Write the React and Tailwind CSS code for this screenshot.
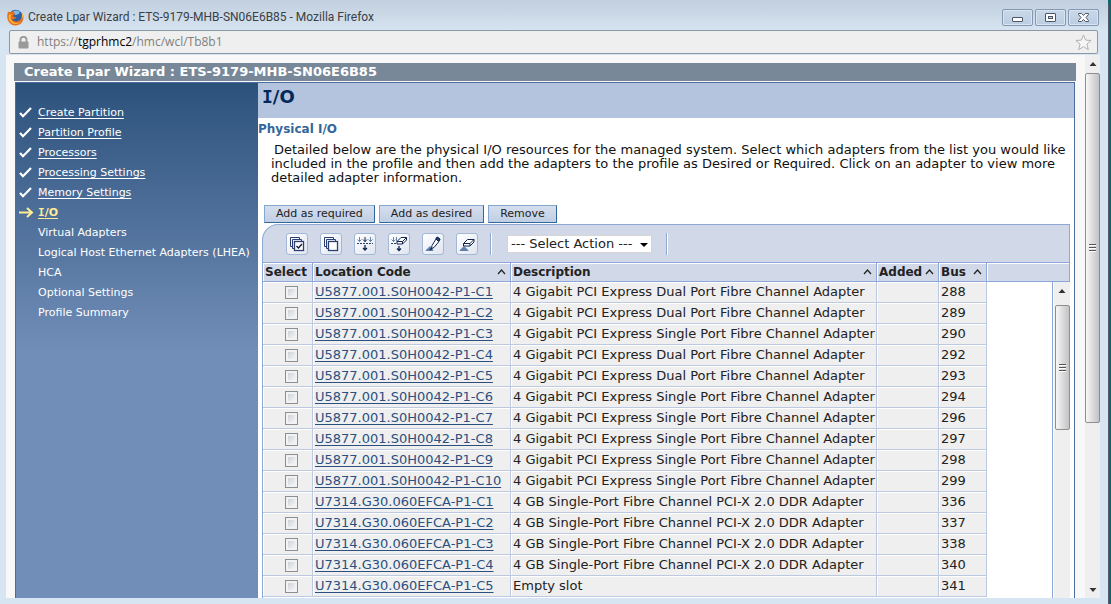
import React from "react";

const steps = [
  { label: "Create Partition", state: "done" },
  { label: "Partition Profile", state: "done" },
  { label: "Processors", state: "done" },
  { label: "Processing Settings", state: "done" },
  { label: "Memory Settings", state: "done" },
  { label: "I/O", state: "current" },
  { label: "Virtual Adapters", state: "todo" },
  { label: "Logical Host Ethernet Adapters (LHEA)", state: "todo" },
  { label: "HCA", state: "todo" },
  { label: "Optional Settings", state: "todo" },
  { label: "Profile Summary", state: "todo" },
];

const DUAL = "4 Gigabit PCI Express Dual Port Fibre Channel Adapter";
const SINGLE = "4 Gigabit PCI Express Single Port Fibre Channel Adapter";
const DDR = "4 GB Single-Port Fibre Channel PCI-X 2.0 DDR Adapter";

const rows = [
  ["U5877.001.S0H0042-P1-C1", DUAL, "288"],
  ["U5877.001.S0H0042-P1-C2", DUAL, "289"],
  ["U5877.001.S0H0042-P1-C3", SINGLE, "290"],
  ["U5877.001.S0H0042-P1-C4", DUAL, "292"],
  ["U5877.001.S0H0042-P1-C5", DUAL, "293"],
  ["U5877.001.S0H0042-P1-C6", SINGLE, "294"],
  ["U5877.001.S0H0042-P1-C7", SINGLE, "296"],
  ["U5877.001.S0H0042-P1-C8", SINGLE, "297"],
  ["U5877.001.S0H0042-P1-C9", SINGLE, "298"],
  ["U5877.001.S0H0042-P1-C10", SINGLE, "299"],
  ["U7314.G30.060EFCA-P1-C1", DDR, "336"],
  ["U7314.G30.060EFCA-P1-C2", DDR, "337"],
  ["U7314.G30.060EFCA-P1-C3", DDR, "338"],
  ["U7314.G30.060EFCA-P1-C4", DDR, "340"],
  ["U7314.G30.060EFCA-P1-C5", "Empty slot", "341"],
];

function FirefoxIcon() {
  return (
    <svg width="17" height="17" viewBox="0 0 17 17" aria-hidden="true">
      <circle cx="8.6" cy="8.2" r="7.4" fill="#2b5fa8" />
      <path d="M6 2.5C8 1 11 1.2 13 3l-2 2.500-3 .5z" fill="#7db8e8" />
      <path
        d="M1.200 2.200C.1 5-.2 8.500.9 11.200 2.200 14.500 5.300 16.500 8.500 16.500c4.500 0 8-3.600 8-8 0-2.400-.9-4.500-2.500-6 .9 1.800 1.100 3.600.7 5.200-.6 2.800-2.900 4.800-5.600 4.700-2 0-3.500-1-4.100-2.400 1.200.6 2.300.3 3.200-.4.5-.4 1-.5 1.200-.9-.7-.8-1.700-.7-2.500-.6-.8-.5-.9-1.200-.6-1.900.6-.4 1.500-.5 2.100-1.100-.1-.6-1.300-.8-2-1.400-.2-.7 0-1.300.6-2-1.200 0-2.200.7-2.800 1.400-.9-.2-1.500-.1-2.200.2C1.500 3.500 1.300 3 1.200 2.200z"
        fill="#e8701a"
      />
      <path d="M2 5.500c-1 3 0 6.500 2.500 8.300C7 15.600 11 15.500 13.500 13 10 15 5.500 13.800 4 10.500 3.300 9 3.500 7 4.500 5.500z" fill="#f8b53a" />
      <path d="M14.300 3.500c1 2 1.200 4.500.2 6.500 1.100-.9 1.600-2.200 1.500-3.400-.2-1.300-.8-2.300-1.700-3.100z" fill="#fbd35a" />
    </svg>
  );
}

function WindowButton({ label, children }) {
  return (
    <button
      type="button"
      aria-label={label}
      className="flex h-[17px] w-[31px] items-center justify-center rounded-xs border border-[#8597b3] bg-linear-to-b from-[#c9d7e8] to-[#bccde2] shadow-[inset_0_0_0_1px_#d9e4f1]"
    >
      <svg width="13" height="11" viewBox="0 0 13 11" aria-hidden="true">
        {children}
      </svg>
    </button>
  );
}

function TitleBar() {
  return (
    <header className="flex h-[30px] shrink-0 items-center gap-1 bg-linear-to-b from-[#c1cfde] to-[#d6e3f0] pt-1 pr-[9px] pl-[7px] font-['Roboto',sans-serif]">
      <FirefoxIcon />
      <h1 className="flex-1 text-[12px] leading-4 text-[#3a4046]">
        Create Lpar Wizard : ETS-9179-MHB-SN06E6B85 - Mozilla Firefox
      </h1>
      <div className="flex gap-0.5">
        <WindowButton label="Minimize">
          <rect x="1.500" y="5.500" width="10" height="4" rx=".5" fill="#fff" stroke="#4c5568" />
        </WindowButton>
        <WindowButton label="Maximize">
          <rect x="1.500" y="1.500" width="10" height="8" rx=".5" fill="#fff" stroke="#4c5568" />
          <rect x="4.500" y="4.500" width="4" height="2" fill="#c5d3e5" stroke="#4c5568" />
        </WindowButton>
        <WindowButton label="Close">
          <path
            d="M1.500 1.500h3l2 2 2-2h3v1L9 5.500l2.500 3v1h-3l-2-2-2 2h-3v-1L4 5.500l-2.500-3z"
            fill="#fff"
            stroke="#4c5568"
          />
        </WindowButton>
      </div>
    </header>
  );
}

function AddressBar() {
  return (
    <div className="mr-[10px] ml-[9px] flex h-6 shrink-0 items-center rounded-xs border border-[#8b98a6] bg-[#efefef] pr-[5px] pl-2 font-['Open_Sans',sans-serif] text-[12px]">
      <svg width="11" height="13" viewBox="0 0 11 13" className="mr-2" aria-hidden="true">
        <path d="M2.500 6V3.800a3 3 0 0 1 6 0V6" fill="none" stroke="#9a9a9a" strokeWidth="1.800" />
        <rect x=".5" y="5.500" width="10" height="7" rx="1" fill="#9a9a9a" />
      </svg>
      <p className="flex-1 text-[#808080]">
        https://<span className="text-black">tgprhmc2</span>/hmc/wcl/Tb8b1
      </p>
      <button type="button" aria-label="Bookmark this page">
        <svg width="17" height="17" viewBox="0 0 17 17" aria-hidden="true">
          <path
            d="M8.500 1l2.100 5.100 5.500.4-4.200 3.500 1.400 5.600-4.800-3-4.800 3 1.400-5.600L.9 6.500l5.500-.4z"
            fill="#f7f7f7"
            stroke="#b2b2b2"
            strokeLinejoin="round"
          />
        </svg>
      </button>
    </div>
  );
}

function Arrow({ down }) {
  return (
    <svg width="8" height="4" viewBox="0 0 8 4" aria-hidden="true">
      <path d={down ? "M.5 0h7L4 4z" : "M.5 4h7L4 0z"} fill="#333" />
    </svg>
  );
}

function Thumb({ className }) {
  return (
    <div
      className={
        "flex items-center justify-center rounded-xs border border-[#8e8e8e] bg-linear-to-r from-[#f8f8f8] via-[#dcdcde] to-[#c3c3c6] " +
        className
      }
    >
      <svg width="7" height="8" viewBox="0 0 7 8" aria-hidden="true">
        <path d="M0 .5h7M0 3.500h7M0 6.500h7" stroke="#555" />
        <path d="M0 1.500h7M0 4.500h7M0 7.500h7" stroke="#fff" />
      </svg>
    </div>
  );
}

function StepMark({ state }) {
  return (
    <svg width="16" height="13" viewBox="0 0 16 13" aria-hidden="true">
      {state === "done" && (
        <path d="M2 6l3 3.200L13 1" fill="none" stroke="#fff" strokeWidth="2.200" />
      )}
      {state === "current" && (
        <path d="M1 5.500h12M9 1l5 4.500L9 10" fill="none" stroke="#ffec94" strokeWidth="2" />
      )}
    </svg>
  );
}

const stepLink = "underline underline-offset-2 [text-decoration-skip-ink:none]";

function Sidebar() {
  return (
    <nav className="w-[243px] shrink-0 border-l border-[#4a6d9e] bg-[#718eb8] bg-linear-to-b from-[#2c527c] to-[#718eb8] to-[270px] pt-5 text-[11px]">
      <ul>
        {steps.map(({ label, state }) => (
          <li key={label} className="flex h-5 items-center gap-1 pl-0.5 whitespace-nowrap text-white">
            <StepMark state={state} />
            {state === "todo" && <span>{label}</span>}
            {state === "done" && (
              <a href="#" className={stepLink}>
                {label}
              </a>
            )}
            {state === "current" && (
              <a href="#" aria-current="step" className={"font-bold text-[#ffec94] " + stepLink}>
                <span className="font-['DejaVu_Sans_Mono',monospace]">I</span>/O
              </a>
            )}
          </li>
        ))}
      </ul>
    </nav>
  );
}

function ActionButton({ children }) {
  return (
    <button
      type="button"
      className="h-[18px] border border-t-[#85a9cc] border-r-[#33669a] border-b-[#33669a] border-l-[#85a9cc] bg-linear-to-b from-[#d5deee] to-[#c0cfe4] px-[11px] text-[11px] leading-4 text-[#222]"
    >
      {children}
    </button>
  );
}

function ToolButton({ label, children }) {
  return (
    <button
      type="button"
      aria-label={label}
      className="flex size-[22px] items-center justify-center rounded-[3px] border border-[#a3b7d6] bg-linear-to-br from-white to-[#dfe5f0]"
    >
      <svg width="18" height="18" viewBox="0 0 18 18" fill="none" stroke="#2b3f70" aria-hidden="true">
        {children}
      </svg>
    </button>
  );
}

function Stack() {
  return (
    <>
      <path d="M4.500 11.500h-2v-9h9v2M6.500 13.500h-2v-9h9v2" />
      <rect x="6.500" y="6.500" width="9" height="9" fill="#fff" strokeWidth="1.300" />
    </>
  );
}

function Toolbar() {
  return (
    <div className="flex h-[38px] shrink-0 items-center gap-3 rounded-tl-2xl border border-b-0 border-[#8fa9d4] bg-[#d1d8e8] pl-[23px]">
      <ToolButton label="Select All">
        <Stack />
        <path d="M8.500 11l2 2 3.500-4" stroke="#101c3c" strokeWidth="1.400" />
      </ToolButton>
      <ToolButton label="Deselect All">
        <Stack />
      </ToolButton>
      <ToolButton label="Show Filter Row">
        <path d="M3.500 2v5M1.500 4.500l2 2 2-2M14.500 2v5M12.500 4.500l2 2 2-2" stroke="#6585b0" />
        <path d="M9 2v5M7 4.500l2 2 2-2" stroke="#12244c" />
        <path d="M1 8.500h16" strokeDasharray="2 1" />
        <path d="M9 10v5M7 13l2 2 2-2" stroke="#12244c" strokeWidth="1.300" />
      </ToolButton>
      <ToolButton label="Clear All Filters">
        <path d="M3.500 2v5M1.500 4.500l2 2 2-2M6.500 2v4" stroke="#6585b0" />
        <path d="M1 8.500h6" strokeDasharray="2 1" />
        <path d="M9 11v5M7 13.500l2 2 2-2" stroke="#12244c" strokeWidth="1.300" />
        <path d="M7 6.500l4-4h5.500v2.500l-4 4H7zM7 6.500h5.500v2.500M12.500 6.500l4-4" fill="#fff" stroke="#12244c" />
      </ToolButton>
      <ToolButton label="Edit Sort">
        <path d="M2 15.500l4-4 3 4z" fill="#5f81ad" stroke="#5f81ad" />
        <path d="M13 2l3 2-1.500 3-4.500 5.500-2.500 1 .5-3L12 4z" fill="#fff" stroke="#12244c" />
        <path d="M13 2l3 2-1.500 2.500-2.500-2.500z" fill="#2b3f70" stroke="#12244c" />
        <path d="M6 15l2-2" stroke="#12244c" strokeWidth="1.600" />
      </ToolButton>
      <ToolButton label="Clear All Sorts">
        <path d="M2 15.500l4-4 4 4z" fill="#5f81ad" stroke="#5f81ad" />
        <path d="M5.500 8.500l4-4H16v2.500l-4 4H5.500zM5.500 8.500H12V11M12 8.500l4-4" fill="#fff" stroke="#12244c" />
      </ToolButton>
      <i className="h-[22px] w-0.5 border-l border-[#93a9cf] bg-white" />
      <div className="relative ml-[3px]">
        <select
          aria-label="Select Action"
          className="block h-[18px] w-[145px] appearance-none border border-[#d5d5d5] bg-white pl-[3px] text-[13px] leading-4 text-[#222]"
        >
          <option>--- Select Action ---</option>
        </select>
        <svg width="8" height="4" viewBox="0 0 8 4" className="pointer-events-none absolute top-2 right-1" aria-hidden="true">
          <path d="M0 0h8L4 4z" fill="#000" />
        </svg>
      </div>
      <i className="ml-0.5 h-[22px] w-0.5 border-l border-[#93a9cf] bg-white" />
    </div>
  );
}

function HeaderCell({ children, sortable, className }) {
  return (
    <th
      scope="col"
      className={
        "border-y border-r border-[#8ba6d8] p-0 pl-0.5 text-left text-[12px] font-bold shadow-[inset_1px_1px_0_#fff] " + className
      }
    >
      <span className="flex items-center justify-between pr-1">
        {children}
        {sortable && (
          <svg width="9" height="6" viewBox="0 0 9 6" aria-hidden="true">
            <path d="M1 5l3.500-4L8 5" fill="none" stroke="#222" strokeWidth="1.200" />
          </svg>
        )}
      </span>
    </th>
  );
}

const cell =
  "border-r border-b border-[#bdc9e0] bg-[#efefef] p-0 pl-0.5 whitespace-nowrap shadow-[inset_1px_1px_0_#fff]";

function AdapterTable() {
  return (
    <div className="flex min-h-0 flex-1 overflow-hidden">
      <div className="min-w-0 flex-1 overflow-hidden border-l border-[#8ba6d8]">
        <table className="w-full table-fixed border-separate border-spacing-0 text-[13px] leading-4 text-[#222]">
          <thead>
            <tr className="h-5 bg-[#d1d8e8]">
              <HeaderCell className="w-[50px]">Select</HeaderCell>
              <HeaderCell className="w-[198px]" sortable>Location Code</HeaderCell>
              <HeaderCell className="w-[366px]" sortable>Description</HeaderCell>
              <HeaderCell className="w-[62px]" sortable>Added</HeaderCell>
              <HeaderCell className="w-12" sortable>Bus</HeaderCell>
              <td className="border-y border-[#8ba6d8] shadow-[inset_1px_1px_0_#fff]" />
            </tr>
          </thead>
          <tbody>
            {rows.map(([code, description, bus]) => (
              <tr key={code} className="h-[21px]">
                <td className={cell}>
                  <input
                    type="checkbox"
                    aria-label={"Select " + code}
                    className="ml-5 block size-[13px] appearance-none border border-[#8a8f8f] bg-linear-to-br from-[#c4c8d0] to-white shadow-[inset_0_0_0_2px_#f2f2f2]"
                  />
                </td>
                <td className={cell}>
                  <a href="#" className="text-[#2b4f80] underline underline-offset-2 [text-decoration-skip-ink:none]">
                    {code}
                  </a>
                </td>
                <td className={cell}>{description}</td>
                <td className={cell} />
                <td className={cell}>{bus}</td>
                <td />
              </tr>
            ))}
          </tbody>
        </table>
      </div>
      <div className="flex w-[18px] shrink-0 flex-col">
        <div className="h-5 shrink-0 border-y border-r border-[#8ba6d8] bg-[#d1d8e8] shadow-[inset_0_1px_0_#fff]" />
        <div className="flex min-h-0 flex-1 flex-col border-l border-[#8ba6d8] pl-px">
          <div className="flex flex-1 flex-col items-center bg-[#efefef]">
            <div className="flex h-[23px] items-start pt-[7px]">
              <Arrow />
            </div>
            <Thumb className="h-[125px] w-[15px]" />
          </div>
        </div>
      </div>
    </div>
  );
}

function MainPanel() {
  return (
    <main className="flex min-w-0 flex-1 flex-col bg-white">
      <h3 className="h-[35px] shrink-0 bg-[#b5c4de] pl-1 text-[18px] leading-[27px] font-bold text-[#03295a]">
        <span className="font-['DejaVu_Sans_Mono',monospace]">I</span>/O
      </h3>
      <h4 className="mt-1 text-[12px] leading-[14px] font-bold text-[#336699]">Physical I/O</h4>
      <p className="mt-[7px] mr-1 ml-[13px] indent-[3px] text-[13px] leading-[14px] text-[#111]">
        Detailed below are the physical I/O resources for the managed system. Select which adapters from the list you
        would like included in the profile and then add the adapters to the profile as Desired or Required. Click on an
        adapter to view more detailed adapter information.
      </p>
      <div className="mt-5 ml-1.5 flex shrink-0 gap-1">
        <ActionButton>Add as required</ActionButton>
        <ActionButton>Add as desired</ActionButton>
        <ActionButton>Remove</ActionButton>
      </div>
      <section className="mt-px mr-1 ml-1 flex min-h-0 flex-1 flex-col">
        <Toolbar />
        <AdapterTable />
      </section>
    </main>
  );
}

export default function App() {
  return (
    <div className="flex h-screen overflow-hidden bg-[#0c6668] pr-0.5 font-['DejaVu_Sans',Verdana,sans-serif]">
      <div className="flex min-w-0 flex-1 flex-col rounded-tr-md border-r border-[#555b66] bg-[#d7e4f1]">
        <TitleBar />
        <AddressBar />
        <div className="mt-px mr-2 mb-1.5 ml-1.5 flex min-h-0 flex-1 bg-[#f8f8f8]">
          <div className="mr-[9px] ml-2 flex min-w-0 flex-1 flex-col pt-2">
            <h2 className="mb-px h-[18px] shrink-0 bg-[#788898] pl-[10px] text-[13px] leading-[18px] font-bold text-white">
              Create Lpar Wizard : ETS-9179-MHB-SN06E6B85
            </h2>
            <div className="mr-px ml-px flex min-h-0 flex-1 border-t border-r border-[#4a6d9e]">
              <Sidebar />
              <MainPanel />
            </div>
          </div>
          <div className="flex w-[15px] shrink-0 flex-col items-center bg-[#efefef]">
            <div className="flex h-[18px] shrink-0 items-center">
              <Arrow />
            </div>
            <Thumb className="h-[350px] w-[15px] shrink-0" />
            <div className="flex flex-1 items-end pb-1.5">
              <Arrow down />
            </div>
          </div>
        </div>
      </div>
    </div>
  );
}
